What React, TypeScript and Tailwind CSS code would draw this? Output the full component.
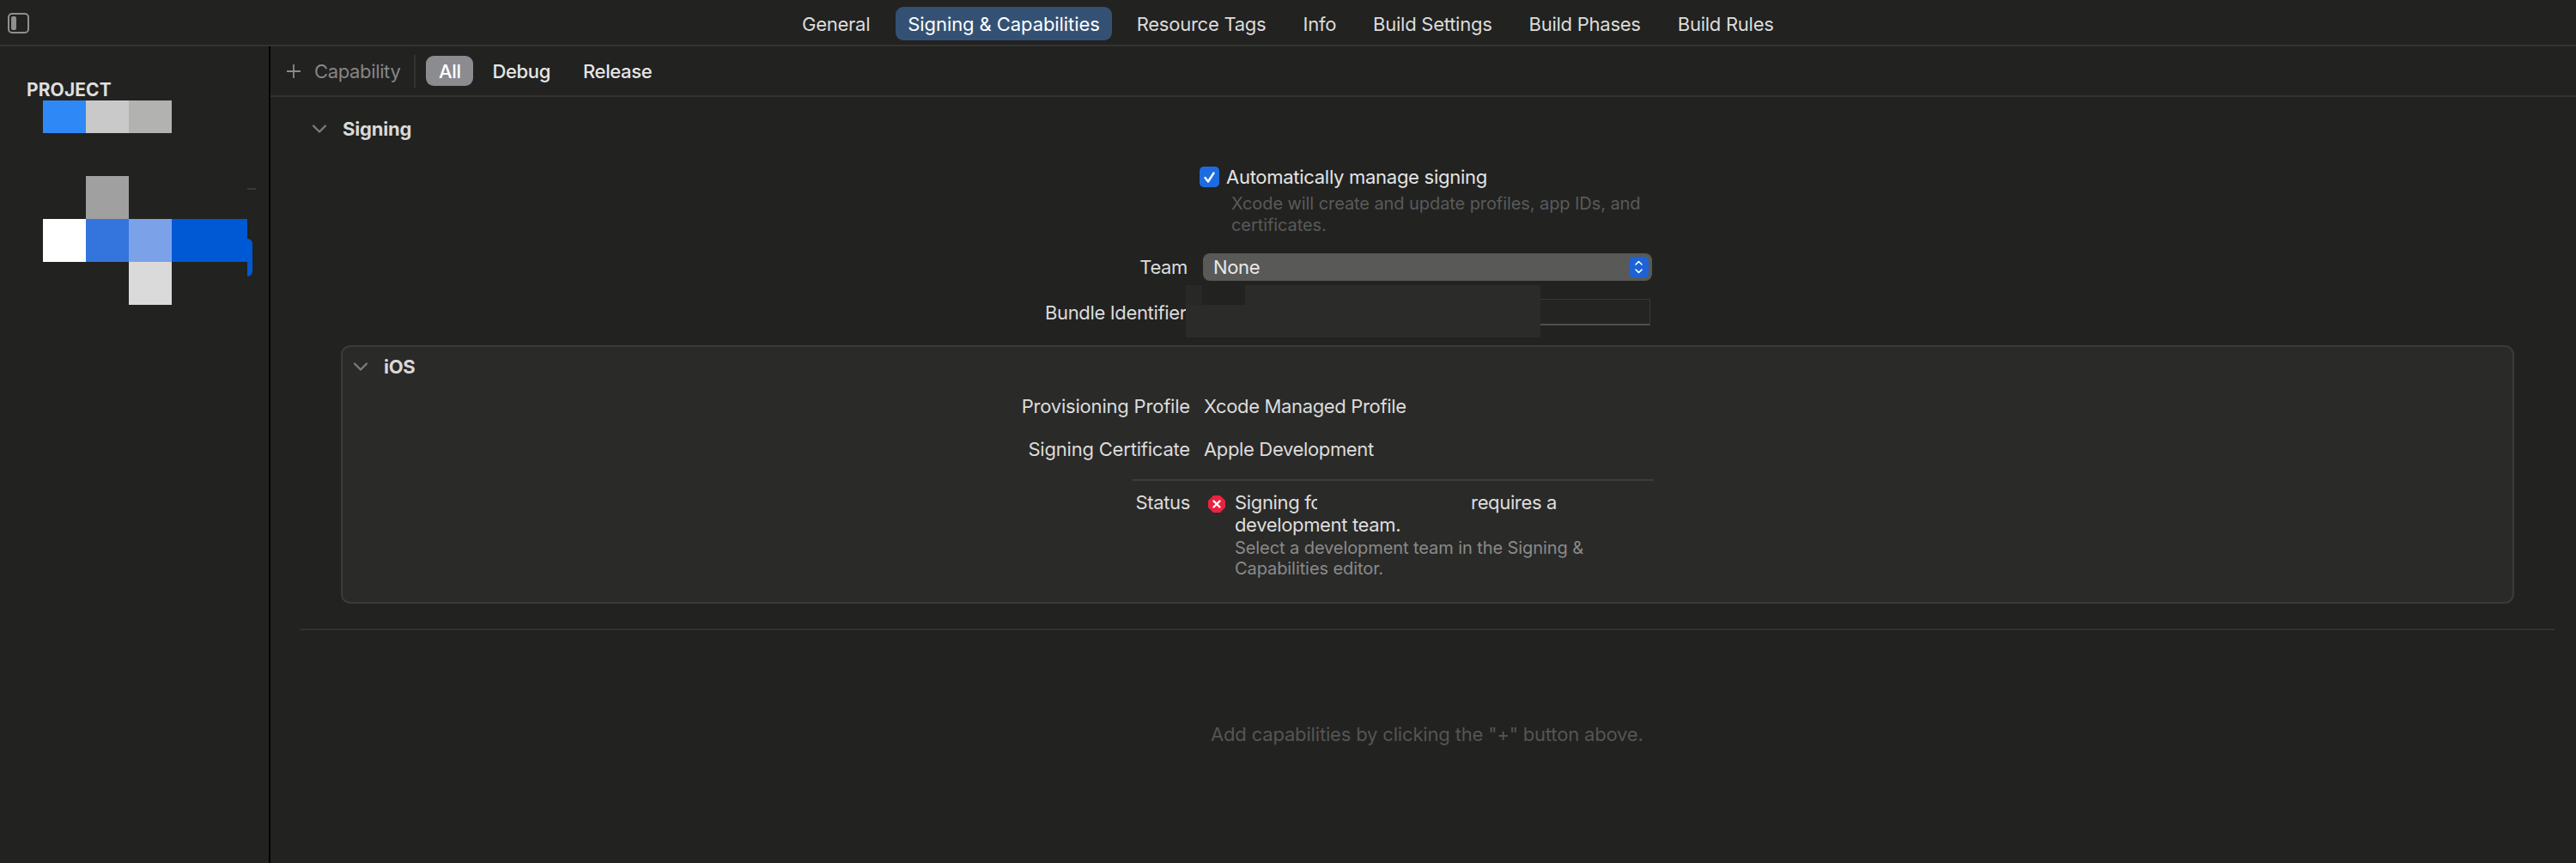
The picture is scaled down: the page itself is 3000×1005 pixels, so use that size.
import React from "react";

const tabs = ["General", "Signing & Capabilities", "Resource Tags", "Info", "Build Settings", "Build Phases", "Build Rules"];

function Chevron() {
  return (
    <svg width="16" height="10" viewBox="0 0 16 10" fill="none" className="shrink-0">
      <path d="M1 1.5 L8 8.5 L15 1.5" stroke="#7b7b7a" strokeWidth="2.4" strokeLinecap="round" strokeLinejoin="round" />
    </svg>
  );
}

function Block({ className }: { className: string }) {
  return <div className={className} />;
}

function Row({ label, value }: { label: string; value: string }) {
  return (
    <div className="flex h-[26px] items-center">
      <div className="w-[987px] text-right tracking-[-0.2px] text-[#dcdcdb]">{label}</div>
      <div className="ml-[16px] tracking-[-0.35px] text-[#dcdcdb]">{value}</div>
    </div>
  );
}

export default function App() {
  return (
    <div className="flex h-[1005px] w-[3000px] flex-col overflow-hidden bg-[#222221] text-[22px] leading-[26px] tracking-[-0.35px] text-[#dcdcdb] [font-family:Inter,'Liberation_Sans',sans-serif]">
      <header className="flex h-[54px] shrink-0 items-start border-b-2 border-[#333332]">
        <div className="mt-[15px] ml-[9px] flex h-[24px] w-[25px] rounded-[5px] border-2 border-[#8f8f8e] p-[2px]">
          <div className="h-full w-[6px] rounded-[2px] bg-[#8f8f8e]" />
        </div>
        <nav className="mt-[8px] ml-[886px] flex items-center gap-[15px]">
          {tabs.map((t, i) => (
            <div
              key={t}
              className={
                i === 1
                  ? "ml-px flex h-[39px] items-center rounded-[9px] bg-[#345174] px-[14px] tracking-[-0.08px] text-white"
                  : "flex h-[39px] items-center px-[14px] tracking-[-0.25px] text-[#dcdcdb]"
              }
            >
              {t}
            </div>
          ))}
        </nav>
      </header>

      <div className="flex min-h-0 flex-1">
        <aside className="w-[315px] shrink-0 border-r-2 border-black pt-[38px]">
          <div className="ml-[31px] text-[21px] leading-[25px] font-bold tracking-[0.1px] text-[#dededd]">PROJECT</div>
          <div className="mt-0 ml-[50px] flex">
            <Block className="h-[38px] w-[50px] bg-[#2e89f6]" />
            <Block className="h-[38px] w-[50px] bg-[#c9c9c9]" />
            <Block className="h-[38px] w-[50px] bg-[#b2b2b1]" />
          </div>
          <div className="relative mt-[50px] ml-[50px]">
            <div className="ml-[50px] h-[50px] w-[50px] bg-[#a0a0a0]" />
            <div className="absolute top-[14px] left-[238px] h-[2px] w-[10px] bg-[#3a3a3a]" />
            <div className="relative flex">
              <Block className="h-[50px] w-[50px] bg-white" />
              <Block className="h-[50px] w-[50px] bg-[#3475dd]" />
              <Block className="h-[50px] w-[50px] bg-[#7ba2e8]" />
              <Block className="h-[50px] w-[88px] bg-[#0059d4]" />
              <div className="absolute top-[23px] left-[238px] h-[44px] w-[6px] rounded-r-[6px] bg-[#0059d4]" />
            </div>
            <div className="ml-[100px] h-[50px] w-[50px] bg-[#dadada]" />
          </div>
        </aside>

        <main className="min-w-0 flex-1">
          <div className="flex h-[59px] items-center border-b-2 border-[#333332]">
            <svg width="18" height="18" viewBox="0 0 18 18" className="ml-[18px] shrink-0">
              <path d="M9 1 V17 M1 9 H17" stroke="#8a8a89" strokeWidth="1.8" />
            </svg>
            <span className="ml-[15px] text-[#868685]">Capability</span>
            <div className="ml-[16px] h-[38px] w-[2px] bg-[#333332]" />
            <div className="ml-[12px] flex h-[35px] w-[55px] items-center justify-center rounded-[9px] bg-[#8b8b90] font-medium text-white">All</div>
            <span className="mt-[1px] ml-[22px] font-medium text-[#e6e6e5]">Debug</span>
            <span className="mt-[1px] ml-[38px] font-medium text-[#e6e6e5]">Release</span>
          </div>

          <div className="mt-[24px] ml-[49px] flex h-[26px] items-center">
            <Chevron />
            <span className="ml-[19px] font-bold tracking-[-0.2px] text-[#d9d9d8]">Signing</span>
          </div>

          <div className="mt-[30px] ml-[1082px] flex h-[26px] items-center">
            <div className="flex h-[24px] w-[23px] items-center justify-center rounded-[5px] bg-[#1c6ce0]">
              <svg width="15" height="15" viewBox="0 0 15 15" fill="none">
                <path d="M2.5 8 L6 12.5 L12.5 2.5" stroke="white" strokeWidth="2.4" strokeLinecap="round" strokeLinejoin="round" />
              </svg>
            </div>
            <span className="ml-[8px] tracking-[-0.28px] text-[#e4e4e3]">Automatically manage signing</span>
          </div>
          <p className="mt-[6px] ml-[1119px] w-[490px] text-[20px] leading-[25px] tracking-[-0.08px] text-[#5a5a59]">
            Xcode will create and update profiles, app IDs, and certificates.
          </p>

          <div className="mt-[20px] flex h-[32px] items-center">
            <div className="w-[1068px] text-right">Team</div>
            <div className="ml-[18px] flex h-[32px] w-[523px] items-center justify-between rounded-[8px] bg-[#595958] pr-[4px] pl-[12px] text-[#e8e8e7]">
              None
              <div className="flex h-[24px] w-[23px] items-center justify-center rounded-[5px] bg-[#1c63d6]">
                <svg width="11" height="18" viewBox="0 0 11 18" fill="none">
                  <path d="M2 6 L5.5 2.5 L9 6 M2 12 L5.5 15.5 L9 12" stroke="white" strokeWidth="1.6" strokeLinecap="round" strokeLinejoin="round" />
                </svg>
              </div>
            </div>
          </div>

          <div className="relative mt-[21px] flex h-[31px] items-center">
            <div className="w-[1068px] pl-[902px] whitespace-nowrap">Bundle Identifier</div>
            <div className="ml-[67px] h-[31px] w-[472px] border-t border-r border-b-2 border-t-[#383837] border-r-[#383837] border-b-[#505050] bg-[#242423]" />
            <div className="absolute top-[7px] left-[1066px] h-[38px] w-[413px] bg-[#2b2b2a]" />
            <div className="absolute top-[-16px] left-[1135px] h-[23px] w-[344px] bg-[#2b2b2a]" />
            <div className="absolute top-[-16px] left-[1066px] h-[23px] w-[19px] bg-[#282827]" />
          </div>

          <section className="mt-[23px] ml-[82px] h-[301px] w-[2531px] rounded-[11px] border-2 border-[#3b3b3a] bg-[#2a2a29]">
            <div className="mt-[10px] ml-[13px] flex h-[26px] items-center">
              <Chevron />
              <span className="ml-[19px] font-bold tracking-[-0.3px] text-[#d9d9d8]">iOS</span>
            </div>
            <div className="mt-[20px] flex flex-col gap-[24px]">
              <Row label="Provisioning Profile" value="Xcode Managed Profile" />
              <Row label="Signing Certificate" value="Apple Development" />
            </div>
            <div className="mt-[22px] ml-[920px] h-[2px] w-[607px] bg-[#3d3d3c]" />
            <div className="mt-[12px] flex">
              <div className="w-[987px] text-right">Status</div>
              <svg width="20" height="20" viewBox="0 0 20 20" className="mt-[5px] ml-[21px] shrink-0">
                <path d="M6 0 H14 L20 6 V14 L14 20 H6 L0 14 V6 Z" fill="#e8233f" />
                <path d="M6.5 6.5 L13.5 13.5 M13.5 6.5 L6.5 13.5" stroke="white" strokeWidth="2.4" strokeLinecap="round" />
              </svg>
              <div className="ml-[11px] w-[430px]">
                <div className="relative text-[#dededd]">
                  <div>
                    Signing for<span className="inline-block w-[166px]" />requires a
                  </div>
                  <div className="absolute top-0 left-[96px] h-[26px] w-[175px] bg-[#2a2a29]" />
                  <div>development team.</div>
                </div>
                <div className="mt-[2px] w-[420px] text-[20px] leading-[24px] tracking-[-0.08px] text-[#8a8a89]">
                  Select a development team in the Signing &amp; Capabilities editor.
                </div>
              </div>
            </div>
          </section>

          <div className="mt-[29px] ml-[35px] h-[2px] w-[2625px] bg-[#333332]" />

          <div className="mt-[108px] pl-[1095px] tracking-[-0.17px] whitespace-nowrap text-[#555554]">Add capabilities by clicking the "+" button above.</div>
        </main>
      </div>
    </div>
  );
}
